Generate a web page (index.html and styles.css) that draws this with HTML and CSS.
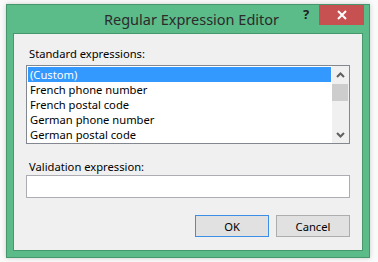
FILE: index.html
```html
<!DOCTYPE html>
<html lang="en">
<head>
  <meta charset="UTF-8">
  <title>Regular Expression Editor</title>
  <link rel="stylesheet" href="styles.css">
</head>
<body>
  <div class="window">
    <header class="titlebar">
      <span></span>
      <h1 class="title">Regular Expression Editor</h1>
      <div class="caption-buttons">
        <span class="help">?</span>
        <span class="close">
          <svg width="10" height="10" viewBox="0 0 10 10">
            <path d="M1 1 L9 9 M9 1 L1 9" stroke="#fff" stroke-width="2" fill="none"/>
          </svg>
        </span>
      </div>
    </header>

    <main class="client">
      <label class="field-label">Standard expressions:</label>
      <div class="listbox">
        <ul class="items">
          <li class="item selected">(Custom)</li>
          <li class="item">French phone number</li>
          <li class="item">French postal code</li>
          <li class="item">German phone number</li>
          <li class="item">German postal code</li>
        </ul>
        <div class="scrollbar">
          <span class="arrow">
            <svg width="9" height="6" viewBox="0 0 9 6">
              <path d="M1 5 L4.5 1.5 L8 5" stroke="#606060" stroke-width="2" fill="none"/>
            </svg>
          </span>
          <span class="thumb"></span>
          <span class="track"></span>
          <span class="arrow">
            <svg width="9" height="6" viewBox="0 0 9 6">
              <path d="M1 1 L4.5 4.5 L8 1" stroke="#606060" stroke-width="2" fill="none"/>
            </svg>
          </span>
        </div>
      </div>

      <label class="field-label second">Validation expression:</label>
      <input class="textbox" type="text">

      <div class="buttons">
        <button class="btn default">OK</button>
        <button class="btn">Cancel</button>
      </div>
    </main>
  </div>
</body>
</html>
```

FILE: styles.css
```css
:root {
  --clr-frame: #5bbb89;
  --clr-frame-edge: #46986c;
  --clr-close: #c75050;
  --clr-face: #f0f0f0;
  --clr-select: #3399ff;
}
*, *::before, *::after {box-sizing: border-box; margin: 0; padding: 0}
body {
  width: 378px;
  height: 262px;
  background: #fafafa;
  font-family: 'Noto Sans', sans-serif;
  font-size: 11.2px;
  color: #000;
  overflow: hidden;
}
.window {
  margin: 4px 0 0 6px;
  width: 364px;
  height: 254px;
  background: var(--clr-frame);
  border: 1px solid var(--clr-frame-edge);
  box-shadow: 0 0 5px rgba(0, 0, 0, .18);
  padding: 0 6px 6px;
  display: flex;
  flex-direction: column;
}
.titlebar {
  height: 28px;
  display: grid;
  grid-template-columns: 1fr auto 1fr;
  align-items: start;
  margin: 0 -7px 0 0;
}
.title {
  font-weight: normal;
  font-size: 14.5px;
  color: #2b2b2b;
  line-height: 20px;
  padding-top: 4px;
  white-space: nowrap;
}
.caption-buttons {
  display: flex;
  justify-content: flex-end;
  padding-right: 6px;
}
.help {
  width: 26px;
  height: 20px;
  text-align: center;
  font-weight: bold;
  font-size: 13px;
  line-height: 18px;
  color: #202020;
}
.close {
  width: 45px;
  height: 20px;
  background: var(--clr-close);
  display: grid;
  place-items: center;
}
.close svg {display: block}
.client {
  flex: 1;
  background: var(--clr-face);
  border: 1px solid var(--clr-frame-edge);
  padding: 12px 12px 0;
  display: flex;
  flex-direction: column;
}
.field-label {
  padding-left: 3px;
  line-height: 15px;
  height: 19px;
}
.field-label.second {
  margin-top: 15px;
  height: 16px;
}
.listbox {
  height: 79px;
  flex-shrink: 0;
  border: 1px solid #828790;
  background: #fff;
  padding: 1px 0 1px 1px;
  display: flex;
  gap: 1px;
}
.items {
  list-style: none;
  flex: 1;
}
.item {
  height: 15px;
  line-height: 15px;
  padding-left: 2px;
  white-space: nowrap;
}
.item.selected {
  background: var(--clr-select);
  color: #fff;
}
.scrollbar {
  width: 17px;
  margin-top: -1px;
  margin-bottom: -1px;
  background: var(--clr-face);
  display: flex;
  flex-direction: column;
}
.arrow {
  height: 17px;
  display: grid;
  place-items: center;
}
.arrow svg {display: block}
.thumb {
  height: 17px;
  margin: 1px 1px 0 0;
  background: #cdcdcd;
}
.track {flex: 1}
.textbox {
  height: 23px;
  flex-shrink: 0;
  border: 1px solid #abadb3;
  background: #fff;
  font: inherit;
}
.buttons {
  margin-top: 17px;
  display: flex;
  justify-content: flex-end;
  gap: 7px;
}
.btn {
  width: 74px;
  height: 22px;
  border: 1px solid #adadad;
  background: #e1e1e1;
  font: inherit;
  color: #000;
}
.btn.default {
  border-color: #3c8ee6;
}
```
